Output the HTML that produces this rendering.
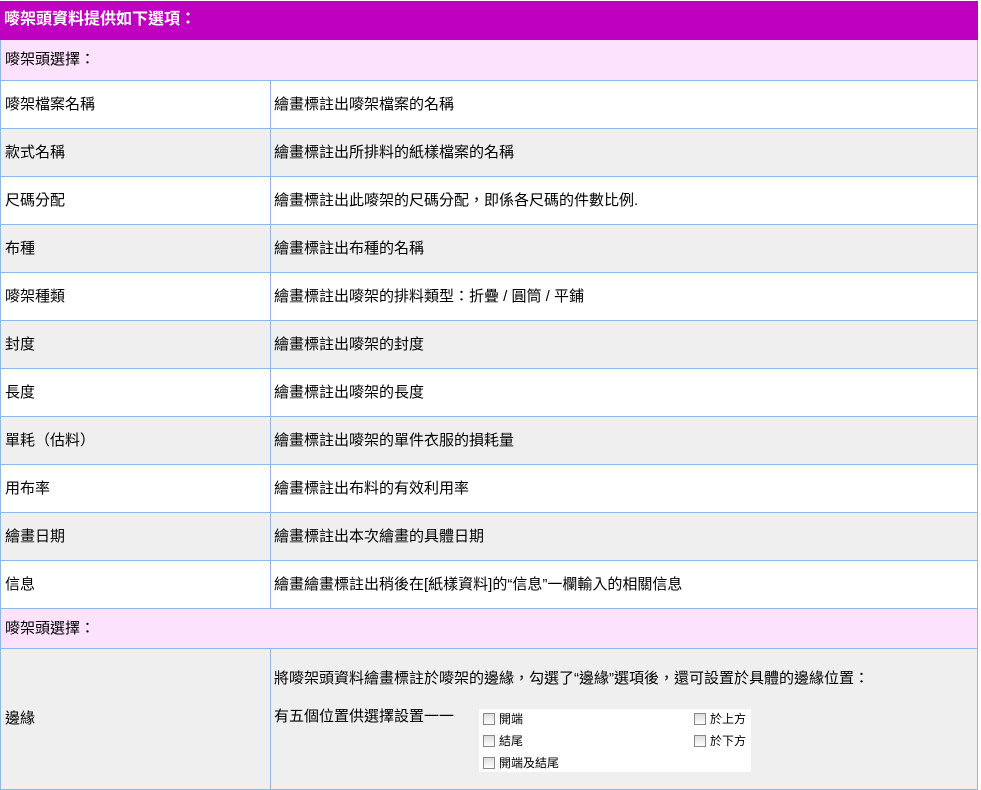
<!DOCTYPE html>
<html><head><meta charset="utf-8"><style>
body{margin:0;width:981px;height:790px;background:#fff;font-family:"Liberation Sans","Noto Sans CJK TC",sans-serif;font-size:15px;color:#000;position:relative;overflow:hidden}
.r{position:absolute;left:0;width:978px;box-sizing:border-box;border-left:1px solid #8fb8e8;border-right:1px solid #8fb8e8;border-bottom:1px solid #8fb8e8}
.c1{position:absolute;left:4px;top:0;line-height:47px}
.c2{position:absolute;left:269px;top:0;bottom:0;border-left:1px solid #8fb8e8;padding-left:3px;line-height:47px;width:700px}
.g{background:#efefef}
.p{background:#fce2fc}
.cb{position:absolute;font-size:12px;line-height:14px}
.cb i{display:inline-block;width:10px;height:10px;border:1px solid #888;background:linear-gradient(#ddd,#fff);vertical-align:-2px;margin-right:4px}
</style></head><body>
<div class="r" style="top:1px;height:39px;background:#c000c0;border:none;"><span style="position:absolute;left:4px;top:0;line-height:38px;color:#fff;font-weight:bold;font-size:16px">嘜架頭資料提供如下選項：</span></div>
<div class="r p" style="top:40px;height:41px"><span class="c1" style="line-height:40px">嘜架頭選擇：</span></div>
<div class="r" style="top:81px;height:48px"><span class="c1">嘜架檔案名稱</span><span class="c2">繪畫標註出嘜架檔案的名稱</span></div>
<div class="r g" style="top:129px;height:48px"><span class="c1">款式名稱</span><span class="c2">繪畫標註出所排料的紙樣檔案的名稱</span></div>
<div class="r" style="top:177px;height:48px"><span class="c1">尺碼分配</span><span class="c2">繪畫標註出此嘜架的尺碼分配，即係各尺碼的件數比例.</span></div>
<div class="r g" style="top:225px;height:48px"><span class="c1">布種</span><span class="c2">繪畫標註出布種的名稱</span></div>
<div class="r" style="top:273px;height:48px"><span class="c1">嘜架種類</span><span class="c2">繪畫標註出嘜架的排料類型：折疊 / 圓筒 / 平鋪</span></div>
<div class="r g" style="top:321px;height:48px"><span class="c1">封度</span><span class="c2">繪畫標註出嘜架的封度</span></div>
<div class="r" style="top:369px;height:48px"><span class="c1">長度</span><span class="c2">繪畫標註出嘜架的長度</span></div>
<div class="r g" style="top:417px;height:48px"><span class="c1">單耗（估料）</span><span class="c2">繪畫標註出嘜架的單件衣服的損耗量</span></div>
<div class="r" style="top:465px;height:48px"><span class="c1">用布率</span><span class="c2">繪畫標註出布料的有效利用率</span></div>
<div class="r g" style="top:513px;height:48px"><span class="c1">繪畫日期</span><span class="c2">繪畫標註出本次繪畫的具體日期</span></div>
<div class="r" style="top:561px;height:48px"><span class="c1">信息</span><span class="c2">繪畫繪畫標註出稍後在[紙樣資料]的“信息”一欄輸入的相關信息</span></div>
<div class="r p" style="top:609px;height:40px"><span class="c1" style="line-height:39px">嘜架頭選擇：</span></div>
<div class="r g" style="top:649px;height:141px"><span class="c1" style="line-height:140px">邊緣</span>
<div class="c2" style="line-height:20px">
<div style="position:absolute;left:3px;top:20px;width:700px">將嘜架頭資料繪畫標註於嘜架的邊緣，勾選了“邊緣”選項後，還可設置於具體的邊緣位置：</div>
<div style="position:absolute;left:3px;top:58px">有五個位置供選擇設置一一</div>
<div style="position:absolute;left:208px;top:60px;width:272px;height:63px;background:#fff">
<span class="cb" style="left:4px;top:3px"><i></i>開端</span>
<span class="cb" style="left:4px;top:25px"><i></i>結尾</span>
<span class="cb" style="left:4px;top:47px"><i></i>開端及結尾</span>
<span class="cb" style="left:215px;top:3px"><i></i>於上方</span>
<span class="cb" style="left:215px;top:25px"><i></i>於下方</span>
</div></div></div>
</body></html>
